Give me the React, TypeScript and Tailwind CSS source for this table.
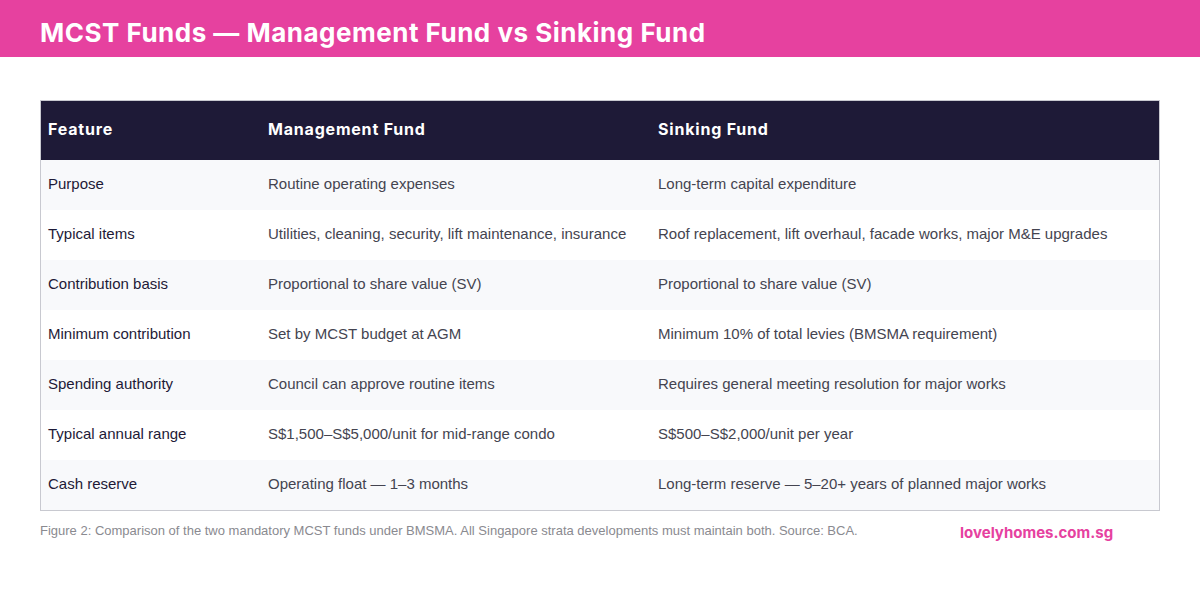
import React from "react";

const rows: [string, string, string][] = [
  ["Purpose", "Routine operating expenses", "Long-term capital expenditure"],
  ["Typical items", "Utilities, cleaning, security, lift maintenance, insurance", "Roof replacement, lift overhaul, facade works, major M&E upgrades"],
  ["Contribution basis", "Proportional to share value (SV)", "Proportional to share value (SV)"],
  ["Minimum contribution", "Set by MCST budget at AGM", "Minimum 10% of total levies (BMSMA requirement)"],
  ["Spending authority", "Council can approve routine items", "Requires general meeting resolution for major works"],
  ["Typical annual range", "S$1,500–S$5,000/unit for mid-range condo", "S$500–S$2,000/unit per year"],
  ["Cash reserve", "Operating float — 1–3 months", "Long-term reserve — 5–20+ years of planned major works"],
];

const head = "font-['Inter',sans-serif]";
const body = "font-['Liberation_Sans',Arial,sans-serif]";

export default function App() {
  return (
    <div className="w-[1200px] h-[600px] bg-white overflow-hidden">
      <div className="h-[57px] bg-[#e6419f] flex items-center px-10">
        <h1 className={`${head} text-white text-[26px] font-bold tracking-[0.5px] leading-none pt-[8px]`}>
          MCST Funds — Management Fund vs Sinking Fund
        </h1>
      </div>
      <div className="px-10 pt-[43px]">
        <div className="border border-[#c8c9d0]">
          <div className="grid grid-cols-[220px_390px_1fr] h-[59px] items-center pb-[3px] bg-[#1e1a37] text-white">
            <div className={`${head} font-bold text-[16px] pl-[7px] tracking-[0.8px]`}>Feature</div>
            <div className={`${head} font-bold text-[16px] pl-[7px] tracking-[0.8px]`}>Management Fund</div>
            <div className={`${head} font-bold text-[16px] pl-[7px] tracking-[0.8px]`}>Sinking Fund</div>
          </div>
          {rows.map((r, i) => (
            <div
              key={i}
              className={`grid grid-cols-[220px_390px_1fr] h-[50px] items-center pb-[2px] ${body} text-[15px] ${i % 2 === 0 ? "bg-[#f8f9fb]" : "bg-white"}`}
            >
              <div className="pl-[7px] text-[#1e1a37]">{r[0]}</div>
              <div className="pl-[7px] text-[#444450]">{r[1]}</div>
              <div className="pl-[7px] text-[#444450]">{r[2]}</div>
            </div>
          ))}
        </div>
        <div className="flex items-start mt-[10px]">
          <p className={`${body} text-[13px] text-[#8a8a90] w-[920px]`}>
            Figure 2: Comparison of the two mandatory MCST funds under BMSMA. All Singapore strata developments must maintain both. Source: BCA.
          </p>
          <p className={`${head} text-[15px] font-bold text-[#e6419f] mt-[1px]`}>lovelyhomes.com.sg</p>
        </div>
      </div>
    </div>
  );
}
